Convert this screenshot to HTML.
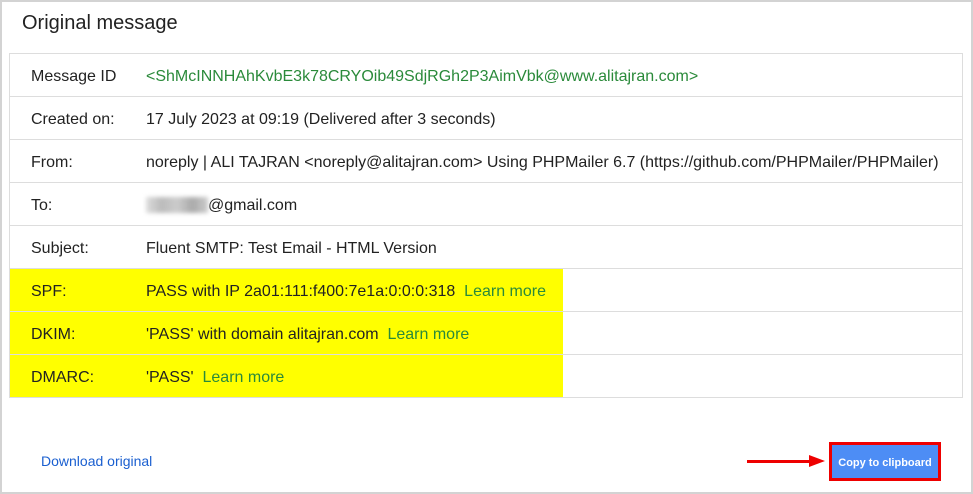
<!DOCTYPE html>
<html><head><style>
body{margin:0;width:973px;height:494px;overflow:hidden;background:#fff;font-family:"Liberation Sans",Arial,sans-serif;}
.frame{position:absolute;left:0;top:0;width:969px;height:490px;border:2px solid #d3d3d3;}
h1{position:absolute;left:22px;top:12px;margin:0;font-size:20px;font-weight:normal;color:#222;}
table{position:absolute;left:9px;top:53px;width:954px;border-collapse:collapse;border:1px solid #ddd;font-size:16px;color:#222;}
td{height:39px;border-top:1px solid #ddd;padding:3px 0 0 0;vertical-align:middle;}
td.l{width:115px;padding-left:21px;}
.g{color:#2a8a3a}
.hl{position:absolute;left:10px;top:269px;width:553px;height:128px;background:#ffff00;}
.blur{display:inline-block;width:62px;height:16px;background:linear-gradient(90deg,#ddd,#bbb,#ccc,#aaa,#ccc);filter:blur(2px);vertical-align:middle;}
.dl{position:absolute;left:41px;top:453px;font-size:14px;color:#1a5fd0;}
.btn{position:absolute;left:829px;top:442px;width:106px;height:33px;background:#4d8df5;border:3px solid #e00;color:#fff;font-size:11px;font-weight:bold;text-align:center;line-height:36px;}
.arr{position:absolute;left:747px;top:460px;width:64px;height:3px;background:#e00;}
.ah{position:absolute;left:809px;top:455px;width:0;height:0;border-left:16px solid #e00;border-top:6px solid transparent;border-bottom:6px solid transparent;}
</style></head><body>
<div class="frame"></div>
<h1>Original message</h1>
<div class="hl"></div>
<table>
<tr><td class="l">Message ID</td><td class="g">&lt;ShMcINNHAhKvbE3k78CRYOib49SdjRGh2P3AimVbk@www.alitajran.com&gt;</td></tr>
<tr><td class="l">Created on:</td><td>17 July 2023 at 09:19 (Delivered after 3 seconds)</td></tr>
<tr><td class="l">From:</td><td>noreply | ALI TAJRAN &lt;noreply@alitajran.com&gt; Using PHPMailer 6.7 (https://github.com/PHPMailer/PHPMailer)</td></tr>
<tr><td class="l">To:</td><td><span class="blur"></span>@gmail.com</td></tr>
<tr><td class="l">Subject:</td><td>Fluent SMTP: Test Email - HTML Version</td></tr>
<tr><td class="l">SPF:</td><td>PASS with IP 2a01:111:f400:7e1a:0:0:0:318 &nbsp;<span class="g">Learn more</span></td></tr>
<tr><td class="l">DKIM:</td><td>'PASS' with domain alitajran.com &nbsp;<span class="g">Learn more</span></td></tr>
<tr><td class="l">DMARC:</td><td>'PASS' &nbsp;<span class="g">Learn more</span></td></tr>
</table>
<div class="dl">Download original</div>
<div class="arr"></div><div class="ah"></div>
<div class="btn">Copy to clipboard</div>
</body></html>
